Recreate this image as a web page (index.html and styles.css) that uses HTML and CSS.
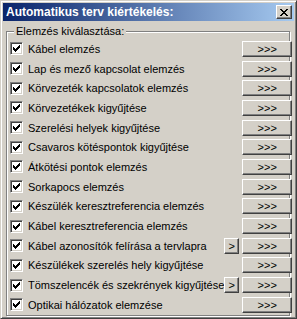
FILE: index.html
```html
<!DOCTYPE html>
<html lang="hu">
<head>
  <meta charset="UTF-8" />
  <title>Automatikus terv kiértékelés</title>
  <link rel="stylesheet" href="styles.css">
</head>
<body>
  <svg width="0" height="0" class="defs">
    <symbol id="check" viewBox="0 0 7 7">
      <rect x="0" y="2" width="1" height="3" />
      <rect x="1" y="3" width="1" height="3" />
      <rect x="2" y="4" width="1" height="3" />
      <rect x="3" y="3" width="1" height="3" />
      <rect x="4" y="2" width="1" height="3" />
      <rect x="5" y="1" width="1" height="3" />
      <rect x="6" y="0" width="1" height="3" />
    </symbol>
  </svg>
  <div class="window">
    <div class="titlebar">
      <span class="title">Automatikus terv kiértékelés:</span>
      <button class="close">
        <svg width="8" height="7" viewBox="0 0 8 7" shape-rendering="crispEdges">
          <rect x="0" y="0" width="2" height="1" /><rect x="6" y="0" width="2" height="1" />
          <rect x="1" y="1" width="2" height="1" /><rect x="5" y="1" width="2" height="1" />
          <rect x="2" y="2" width="4" height="1" />
          <rect x="3" y="3" width="2" height="1" />
          <rect x="2" y="4" width="4" height="1" />
          <rect x="1" y="5" width="2" height="1" /><rect x="5" y="5" width="2" height="1" />
          <rect x="0" y="6" width="2" height="1" /><rect x="6" y="6" width="2" height="1" />
        </svg>
      </button>
    </div>
    <fieldset class="group">
      <legend>Elemzés kiválasztása:</legend>
      <div class="rows">
        <div class="row"><span class="check"><svg><use href="#check"/></svg></span><span class="label">Kábel elemzés</span><button class="btn">&gt;&gt;&gt;</button></div>
        <div class="row"><span class="check"><svg><use href="#check"/></svg></span><span class="label">Lap és mező kapcsolat elemzés</span><button class="btn">&gt;&gt;&gt;</button></div>
        <div class="row"><span class="check"><svg><use href="#check"/></svg></span><span class="label">Körvezeték kapcsolatok elemzés</span><button class="btn">&gt;&gt;&gt;</button></div>
        <div class="row"><span class="check"><svg><use href="#check"/></svg></span><span class="label">Körvezetékek kigyűjtése</span><button class="btn">&gt;&gt;&gt;</button></div>
        <div class="row"><span class="check"><svg><use href="#check"/></svg></span><span class="label">Szerelési helyek kigyűjtése</span><button class="btn">&gt;&gt;&gt;</button></div>
        <div class="row"><span class="check"><svg><use href="#check"/></svg></span><span class="label">Csavaros kötéspontok kigyűjtése</span><button class="btn">&gt;&gt;&gt;</button></div>
        <div class="row"><span class="check"><svg><use href="#check"/></svg></span><span class="label">Átkötési pontok elemzés</span><button class="btn">&gt;&gt;&gt;</button></div>
        <div class="row"><span class="check"><svg><use href="#check"/></svg></span><span class="label">Sorkapocs elemzés</span><button class="btn">&gt;&gt;&gt;</button></div>
        <div class="row"><span class="check"><svg><use href="#check"/></svg></span><span class="label">Készülék keresztreferencia elemzés</span><button class="btn">&gt;&gt;&gt;</button></div>
        <div class="row"><span class="check"><svg><use href="#check"/></svg></span><span class="label">Kábel keresztreferencia elemzés</span><button class="btn">&gt;&gt;&gt;</button></div>
        <div class="row"><span class="check"><svg><use href="#check"/></svg></span><span class="label">Kábel azonosítók felírása a tervlapra</span><button class="btn small">&gt;</button><button class="btn">&gt;&gt;&gt;</button></div>
        <div class="row"><span class="check"><svg><use href="#check"/></svg></span><span class="label">Készülékek szerelés hely kigyűjtése</span><button class="btn">&gt;&gt;&gt;</button></div>
        <div class="row"><span class="check"><svg><use href="#check"/></svg></span><span class="label">Tömszelencék és szekrények kigyűjtése</span><button class="btn small">&gt;</button><button class="btn">&gt;&gt;&gt;</button></div>
        <div class="row"><span class="check"><svg><use href="#check"/></svg></span><span class="label">Optikai hálózatok elemzése</span><button class="btn">&gt;&gt;&gt;</button></div>
      </div>
    </fieldset>
  </div>
</body>
</html>
```

FILE: styles.css
```css
body {
  margin: 0;
  font-family: "Liberation Sans", Arial, sans-serif;
  font-size: 11px;
  color: #000;
  background: #d4d0c8;
}

.defs {
  position: absolute;
}

.window {
  width: 297px;
  height: 319px;
  box-sizing: border-box;
  overflow: hidden;
  background: #d4d0c8;
  border: 1px solid;
  border-color: #d4d0c8 #404040 #404040 #d4d0c8;
  box-shadow: inset 1px 1px 0 #fff, inset -1px -1px 0 #808080;
  padding: 2px;
}

.titlebar {
  height: 18px;
  display: flex;
  align-items: center;
  padding: 0 2px 0 3px;
  background: linear-gradient(to right, #0a246a, #a6caf0);
  color: #fff;
  font-weight: bold;
  font-size: 12px;
}

.title {
  flex: 1;
}

.close {
  width: 16px;
  height: 14px;
  padding: 0;
  display: flex;
  align-items: center;
  justify-content: center;
  background: #d4d0c8;
  border: 1px solid;
  border-color: #fff #404040 #404040 #fff;
  box-shadow: inset -1px -1px 0 #808080;
}

.close svg {
  fill: #000;
  margin-left: -1px;
}

.group {
  margin: 4px 4px 0 3px;
  padding: 0 2px 0 3px;
  border: 1px solid #808080;
  box-shadow: 1px 1px 0 #fff, inset 1px 1px 0 #fff;
  min-inline-size: 0;
}

.group legend {
  margin-left: 4px;
  padding: 0 2px;
  background: #d4d0c8;
  line-height: 13px;
}

.rows {
  display: grid;
  grid-template-rows: repeat(14, 19.7px);
  padding-top: 1px;
}

.row {
  display: flex;
  align-items: center;
}

.check {
  width: 13px;
  height: 13px;
  box-sizing: border-box;
  flex: none;
  background: #fff;
  border: 1px solid;
  border-color: #808080 #fff #fff #808080;
  box-shadow: inset 1px 1px 0 #404040, inset -1px -1px 0 #d4d0c8;
  padding: 2px;
}

.check svg {
  display: block;
  width: 7px;
  height: 7px;
  fill: #000;
  shape-rendering: crispEdges;
}

.label {
  flex: 1;
  min-width: 0;
  margin-left: 5px;
  white-space: nowrap;
  overflow: hidden;
}

.btn {
  flex: none;
  width: 50px;
  height: 16px;
  padding: 0;
  font-family: inherit;
  font-size: 11px;
  line-height: 12px;
  color: #000;
  background: #d4d0c8;
  border: 1px solid;
  border-color: #fff #404040 #404040 #fff;
  box-shadow: inset -1px -1px 0 #808080;
}

.btn.small {
  width: 15px;
  margin-right: 3px;
}
```
